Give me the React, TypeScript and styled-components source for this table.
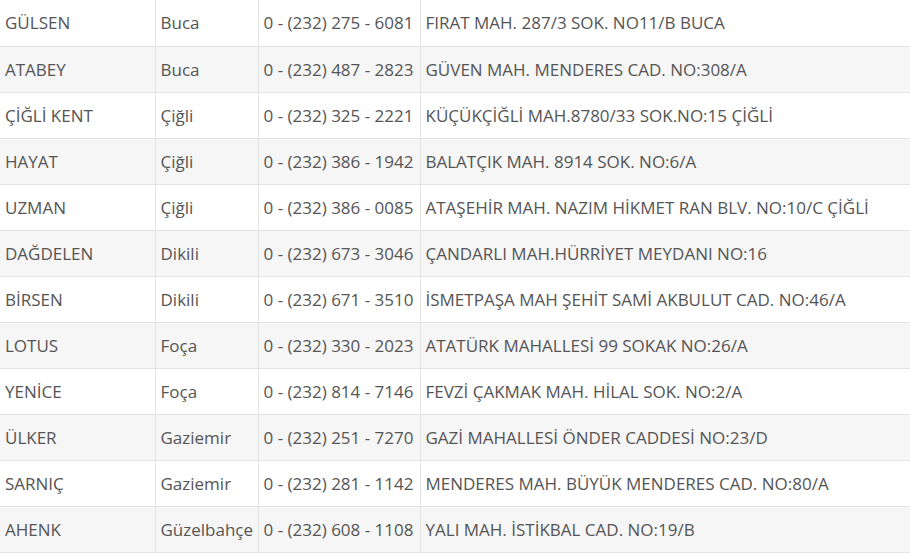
import React from "react";
import styled, { createGlobalStyle } from "styled-components";

const Global = createGlobalStyle`
  html, body { margin: 0; padding: 0; background: #fff; }
  body { font-family: "Open Sans", "Liberation Sans", sans-serif; overflow: hidden; }
`;

const Table = styled.table`
  width: 910px;
  border-collapse: collapse;
  table-layout: fixed;
  color: #555;
  font-size: 17px;
`;

const Row = styled.tr<{ $striped: boolean }>`
  height: 46px;
  background: ${(p) => (p.$striped ? "#f6f6f6" : "#fff")};
  border-bottom: 1px solid #e4e4e4;
`;

const Cell = styled.td<{ $first?: boolean }>`
  padding: 0 0 0 5px;
  vertical-align: middle;
  white-space: nowrap;
  overflow: hidden;
  border-left: ${(p) => (p.$first ? "none" : "1px solid #e4e4e4")};
`;

const rows: [string, string, string, string][] = [
  ["GÜLSEN", "Buca", "0 - (232) 275 - 6081", "FIRAT MAH. 287/3 SOK. NO11/B BUCA"],
  ["ATABEY", "Buca", "0 - (232) 487 - 2823", "GÜVEN MAH. MENDERES CAD. NO:308/A"],
  ["ÇİĞLİ KENT", "Çiğli", "0 - (232) 325 - 2221", "KÜÇÜKÇİĞLİ MAH.8780/33 SOK.NO:15 ÇİĞLİ"],
  ["HAYAT", "Çiğli", "0 - (232) 386 - 1942", "BALATÇIK MAH. 8914 SOK. NO:6/A"],
  ["UZMAN", "Çiğli", "0 - (232) 386 - 0085", "ATAŞEHİR MAH. NAZIM HİKMET RAN BLV. NO:10/C ÇİĞLİ"],
  ["DAĞDELEN", "Dikili", "0 - (232) 673 - 3046", "ÇANDARLI MAH.HÜRRİYET MEYDANI NO:16"],
  ["BİRSEN", "Dikili", "0 - (232) 671 - 3510", "İSMETPAŞA MAH ŞEHİT SAMİ AKBULUT CAD. NO:46/A"],
  ["LOTUS", "Foça", "0 - (232) 330 - 2023", "ATATÜRK MAHALLESİ 99 SOKAK NO:26/A"],
  ["YENİCE", "Foça", "0 - (232) 814 - 7146", "FEVZİ ÇAKMAK MAH. HİLAL SOK. NO:2/A"],
  ["ÜLKER", "Gaziemir", "0 - (232) 251 - 7270", "GAZİ MAHALLESİ ÖNDER CADDESİ NO:23/D"],
  ["SARNIÇ", "Gaziemir", "0 - (232) 281 - 1142", "MENDERES MAH. BÜYÜK MENDERES CAD. NO:80/A"],
  ["AHENK", "Güzelbahçe", "0 - (232) 608 - 1108", "YALI MAH. İSTİKBAL CAD. NO:19/B"],
];

export default function App() {
  return (
    <>
      <Global />
      <Table>
        <colgroup>
          <col style={{ width: 155 }} />
          <col style={{ width: 103 }} />
          <col style={{ width: 162 }} />
          <col />
        </colgroup>
        <tbody>
          {rows.map((r, i) => (
            <Row key={i} $striped={i % 2 === 1}>
              <Cell $first>{r[0]}</Cell>
              <Cell>{r[1]}</Cell>
              <Cell>{r[2]}</Cell>
              <Cell>{r[3]}</Cell>
            </Row>
          ))}
        </tbody>
      </Table>
    </>
  );
}
